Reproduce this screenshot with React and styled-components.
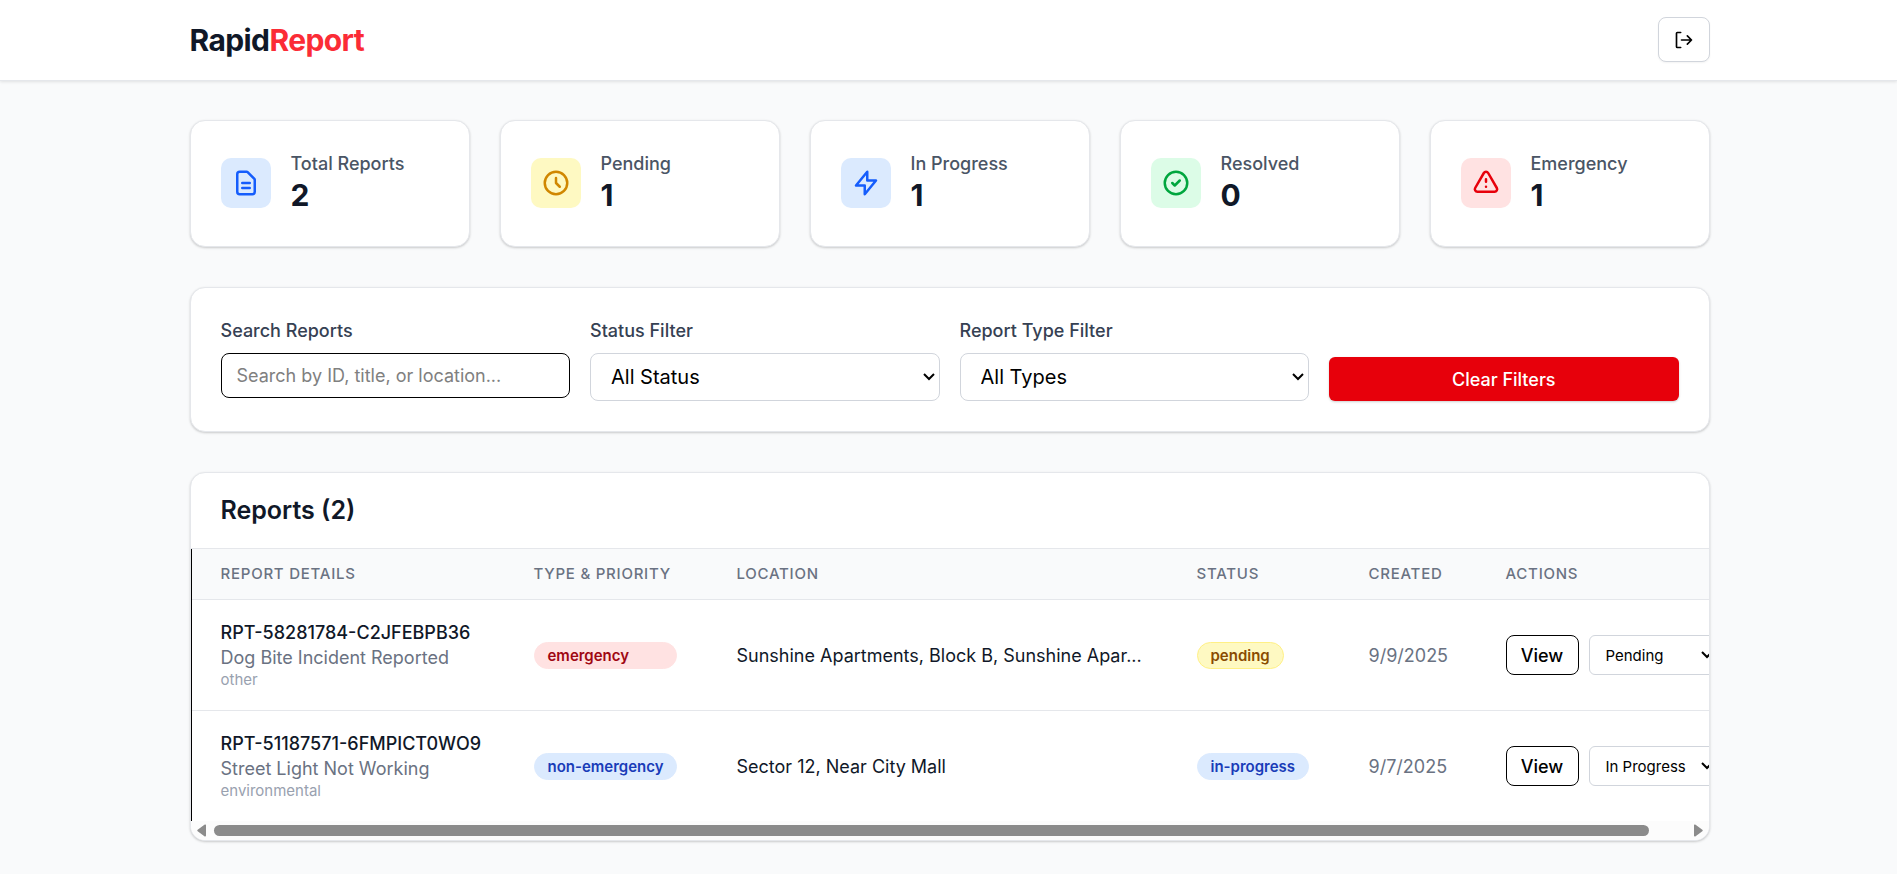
import React, { useState } from 'react';
import styled, { createGlobalStyle } from 'styled-components';

const GlobalStyle = createGlobalStyle`
  *, *::before, *::after {
    box-sizing: border-box;
  }

  body {
    margin: 0;
    background: #f9fafb;
    color: #101828;
    font-family: Inter, 'Liberation Sans', sans-serif;
    font-size: 18px;
    line-height: 25px;
  }

  button, input, select {
    font-family: inherit;
    margin: 0;
  }
`;

const Header = styled.header`
  background: white;
  border-bottom: 1px solid #e5e7eb;
  box-shadow: 0 1px 3px rgba(0, 0, 0, 0.1);
`;

const HeaderInner = styled.div`
  display: flex;
  align-items: center;
  justify-content: space-between;
  max-width: 1600px;
  margin: 0 auto;
  padding: 17px 39px 18px 41px;
`;

const Logo = styled.h1`
  margin: 0;
  font-size: 30px;
  line-height: 40px;
  font-weight: 700;
  letter-spacing: -0.02em;

  span {
    color: #fb2c36;
  }
`;

const LogoutButton = styled.button`
  display: flex;
  align-items: center;
  justify-content: center;
  width: 52px;
  height: 45px;
  padding: 0;
  background: white;
  color: black;
  border: 1px solid #d1d5dc;
  border-radius: 8px;
  box-shadow: 0 1px 2px rgba(0, 0, 0, 0.05);
  cursor: pointer;
`;

const Main = styled.main`
  display: flex;
  flex-direction: column;
  gap: 40px;
  max-width: 1600px;
  margin: 0 auto;
  padding: 39px 39px 34px 41px;
`;

const Card = styled.section`
  background: white;
  border: 1px solid #e5e7eb;
  border-radius: 15px;
  box-shadow: 0 1px 3px rgba(0, 0, 0, 0.1), 0 1px 2px rgba(0, 0, 0, 0.1);
`;

const Stats = styled.div`
  display: grid;
  grid-template-columns: repeat(5, 1fr);
  gap: 30px;
`;

const StatCard = styled(Card)`
  display: flex;
  align-items: center;
  gap: 20px;
  padding: 30px 30px 32px;
`;

const StatIcon = styled.div`
  display: flex;
  align-items: center;
  justify-content: center;
  width: 50px;
  height: 50px;
  border-radius: 10px;
  background: ${(p) => p.$bg};
  color: ${(p) => p.$color};
`;

const StatLabel = styled.p`
  margin: 0;
  font-weight: 500;
  color: #4a5565;
`;

const StatValue = styled.p`
  margin: 0;
  font-size: 30px;
  line-height: 38px;
  font-weight: 700;
`;

const Filters = styled(Card)`
  display: grid;
  grid-template-columns: repeat(4, 1fr);
  align-items: start;
  gap: 20px;
  padding: 30px;
`;

const Field = styled.div`
  display: flex;
  flex-direction: column;
  gap: 10px;
`;

const Label = styled.label`
  font-weight: 500;
  color: #364153;
`;

const SearchInput = styled.input`
  width: 100%;
  height: 45px;
  padding: 0 15px;
  border: 1px solid black;
  border-radius: 8px;
  font-size: 18px;

  &::placeholder {
    color: #808080;
  }
`;

const Select = styled.select`
  appearance: none;
  background: white url("data:image/svg+xml,%3Csvg xmlns='http://www.w3.org/2000/svg' width='12' height='8' fill='none' stroke='black' stroke-width='2'%3E%3Cpath d='M1 1l5 5 5-5'/%3E%3C/svg%3E") no-repeat right 4px center;
  color: black;
  border: 1px solid #d1d5dc;
`;

const FilterSelect = styled(Select)`
  width: 100%;
  height: 48px;
  padding: 0 20px;
  border-radius: 8px;
  font-size: 20px;
`;

const ClearButton = styled.button`
  align-self: end;
  height: 44px;
  background: #e7000b;
  color: white;
  border: none;
  border-radius: 6px;
  box-shadow: 0 1px 3px rgba(0, 0, 0, 0.1), 0 1px 2px rgba(0, 0, 0, 0.1);
  font-size: 18px;
  font-weight: 500;
  cursor: pointer;
`;

const ReportsCard = styled(Card)`
  overflow: hidden;
`;

const ReportsTitle = styled.h2`
  margin: 0;
  padding: 20px 30px;
  border-bottom: 1px solid #e5e7eb;
  font-size: 25px;
  line-height: 35px;
  font-weight: 600;
`;

const TableScroll = styled.div`
  overflow-x: auto;
  border-left: 1px solid black;
  scrollbar-width: none;
`;

const Table = styled.table`
  width: 1556px;
  min-width: 100%;
  table-layout: fixed;
  border-collapse: collapse;
  text-align: left;
  white-space: nowrap;

  th {
    padding: 15px 30px;
    background: #f9fafb;
    color: #6a7282;
    font-size: 15px;
    line-height: 20px;
    font-weight: 500;
    letter-spacing: 0.05em;
    text-transform: uppercase;
  }

  td {
    padding: 20px 30px;
  }

  th:first-child, td:first-child {
    padding-left: 29px;
  }

  tbody tr {
    border-top: 1px solid #e5e7eb;
  }
`;

const HeadCell = styled.th`
  width: ${(p) => p.$width}px;
`;

const ReportId = styled.div`
  font-weight: 500;
`;

const Muted = styled.div`
  color: #6a7282;
`;

const Category = styled.div`
  color: #99a1af;
  font-size: 15px;
  line-height: 20px;
`;

const badgeColors = {
  emergency: ['#ffe2e2', '#9f0712', '#ffe2e2'],
  'non-emergency': ['#dbeafe', '#193cb8', '#dbeafe'],
  pending: ['#fef9c2', '#894b00', '#fff085'],
  'in-progress': ['#dbeafe', '#193cb8', '#dbeafe'],
};

const Badge = styled.span`
  display: ${(p) => (p.$block ? 'block' : 'inline-block')};
  vertical-align: middle;
  padding: 3px 13px;
  border: 1px solid ${(p) => badgeColors[p.$kind][2]};
  border-radius: 14px;
  background: ${(p) => badgeColors[p.$kind][0]};
  color: ${(p) => badgeColors[p.$kind][1]};
  font-size: 15px;
  line-height: 19px;
  font-weight: 600;
`;

const Actions = styled.div`
  display: flex;
  gap: 10px;
`;

const ViewButton = styled.button`
  width: 73px;
  height: 40px;
  padding: 0;
  background: white;
  color: black;
  border: 1px solid black;
  border-radius: 8px;
  font-size: 18px;
  font-weight: 500;
  cursor: pointer;
`;

const StatusSelect = styled(Select)`
  width: 129px;
  height: 40px;
  padding: 0 16px;
  border-radius: 6px;
  font-size: 15px;
`;

const ScrollBar = styled.div`
  display: flex;
  align-items: center;
  gap: 7px;
  height: 19px;
  padding: 0 6px;
  background: #fcfcfc;
  color: #8b8b8b;
`;

const ScrollTrack = styled.div`
  flex: 1;
`;

const ScrollThumb = styled.div`
  width: calc(100% - 37px);
  height: 11px;
  border-radius: 6px;
  background: #8b8b8b;
`;

const stats = [
  { label: 'Total Reports', value: 2, bg: '#dbeafe', color: '#155dfc', path: 'M9 12h6m-6 4h6m2 5H7a2 2 0 01-2-2V5a2 2 0 012-2h5.586a1 1 0 01.707.293l5.414 5.414a1 1 0 01.293.707V19a2 2 0 01-2 2z' },
  { label: 'Pending', value: 1, bg: '#fef9c2', color: '#d08700', path: 'M12 8v4l3 3m6-3a9 9 0 11-18 0 9 9 0 0118 0z' },
  { label: 'In Progress', value: 1, bg: '#dbeafe', color: '#155dfc', path: 'M13 10V3L4 14h7v7l9-11h-7z' },
  { label: 'Resolved', value: 0, bg: '#dcfce7', color: '#00a63e', path: 'M9 12l2 2 4-4m6 2a9 9 0 11-18 0 9 9 0 0118 0z' },
  { label: 'Emergency', value: 1, bg: '#ffe2e2', color: '#e7000b', path: 'M12 9v2m0 4h.01m-6.938 4h13.856c1.54 0 2.502-1.667 1.732-3L13.732 4c-.77-1.333-2.694-1.333-3.464 0L3.34 16c-.77 1.333.192 3 1.732 3z' },
];

const columns = [
  { label: 'Report Details', width: 312 },
  { label: 'Type & Priority', width: 203 },
  { label: 'Location', width: 460 },
  { label: 'Status', width: 172 },
  { label: 'Created', width: 137 },
  { label: 'Actions', width: 272 },
];

const initialReports = [
  { id: 'RPT-58281784-C2JFEBPB36', title: 'Dog Bite Incident Reported', category: 'other', type: 'emergency', location: 'Sunshine Apartments, Block B, Sunshine Apar...', status: 'pending', created: '9/9/2025' },
  { id: 'RPT-51187571-6FMPICT0WO9', title: 'Street Light Not Working', category: 'environmental', type: 'non-emergency', location: 'Sector 12, Near City Mall', status: 'in-progress', created: '9/7/2025' },
];

const Icon = ({ path, size = 30 }) => (
  <svg width={size} height={size} viewBox="0 0 24 24" fill="none" stroke="currentColor" strokeWidth="2" strokeLinecap="round" strokeLinejoin="round" aria-hidden="true">
    <path d={path} />
  </svg>
);

const App = () => {
  const [search, setSearch] = useState('');
  const [status, setStatus] = useState('all');
  const [type, setType] = useState('all');
  const [reports, setReports] = useState(initialReports);

  const visible = reports.filter((r) => {
    const text = `${r.id} ${r.title} ${r.location}`.toLowerCase();
    return (
      text.includes(search.toLowerCase()) &&
      (status === 'all' || r.status === status) &&
      (type === 'all' || r.type === type)
    );
  });

  const clearFilters = () => {
    setSearch('');
    setStatus('all');
    setType('all');
  };

  const updateStatus = (id, next) => {
    setReports(reports.map((r) => (r.id === id ? { ...r, status: next } : r)));
  };

  return (
    <>
      <GlobalStyle />
      <Header>
        <HeaderInner>
          <Logo>Rapid<span>Report</span></Logo>
          <LogoutButton aria-label="Log out">
            <Icon size={20} path="M8 3H4a1 1 0 00-1 1v16a1 1 0 001 1h4M9 12h12M16 7l5 5-5 5" />
          </LogoutButton>
        </HeaderInner>
      </Header>

      <Main>
        <Stats>
          {stats.map((s) => (
            <StatCard key={s.label}>
              <StatIcon $bg={s.bg} $color={s.color}>
                <Icon path={s.path} />
              </StatIcon>
              <div>
                <StatLabel>{s.label}</StatLabel>
                <StatValue>{s.value}</StatValue>
              </div>
            </StatCard>
          ))}
        </Stats>

        <Filters>
          <Field>
            <Label htmlFor="search">Search Reports</Label>
            <SearchInput
              id="search"
              value={search}
              onChange={(e) => setSearch(e.target.value)}
              placeholder="Search by ID, title, or location..."
            />
          </Field>
          <Field>
            <Label htmlFor="status">Status Filter</Label>
            <FilterSelect id="status" value={status} onChange={(e) => setStatus(e.target.value)}>
              <option value="all">All Status</option>
              <option value="pending">Pending</option>
              <option value="in-progress">In Progress</option>
            </FilterSelect>
          </Field>
          <Field>
            <Label htmlFor="type">Report Type Filter</Label>
            <FilterSelect id="type" value={type} onChange={(e) => setType(e.target.value)}>
              <option value="all">All Types</option>
              <option value="emergency">Emergency</option>
              <option value="non-emergency">Non-Emergency</option>
            </FilterSelect>
          </Field>
          <ClearButton onClick={clearFilters}>Clear Filters</ClearButton>
        </Filters>

        <ReportsCard>
          <ReportsTitle>Reports ({visible.length})</ReportsTitle>
          <TableScroll>
            <Table>
              <thead>
                <tr>
                  {columns.map((c) => (
                    <HeadCell key={c.label} $width={c.width}>{c.label}</HeadCell>
                  ))}
                </tr>
              </thead>
              <tbody>
                {visible.map((r) => (
                  <tr key={r.id}>
                    <td>
                      <ReportId>{r.id}</ReportId>
                      <Muted>{r.title}</Muted>
                      <Category>{r.category}</Category>
                    </td>
                    <td><Badge $block $kind={r.type}>{r.type}</Badge></td>
                    <td>{r.location}</td>
                    <td><Badge $kind={r.status}>{r.status}</Badge></td>
                    <td><Muted>{r.created}</Muted></td>
                    <td>
                      <Actions>
                        <ViewButton>View</ViewButton>
                        <StatusSelect
                          aria-label={`Status of ${r.id}`}
                          value={r.status}
                          onChange={(e) => updateStatus(r.id, e.target.value)}
                        >
                          <option value="pending">Pending</option>
                          <option value="in-progress">In Progress</option>
                        </StatusSelect>
                      </Actions>
                    </td>
                  </tr>
                ))}
              </tbody>
            </Table>
          </TableScroll>
          <ScrollBar aria-hidden="true">
            <svg width="10" height="13" viewBox="0 0 10 13" fill="currentColor"><path d="M9 1.500v10a1 1 0 01-1.600.800L1 7.500a1.200 1.200 0 010-2L7.400.700A1 1 0 019 1.500z" /></svg>
            <ScrollTrack><ScrollThumb /></ScrollTrack>
            <svg width="10" height="13" viewBox="0 0 10 13" fill="currentColor"><path d="M1 1.500v10a1 1 0 001.600.800L9 7.500a1.200 1.200 0 000-2L2.600.700A1 1 0 001 1.500z" /></svg>
          </ScrollBar>
        </ReportsCard>
      </Main>
    </>
  );
};

export default App;
